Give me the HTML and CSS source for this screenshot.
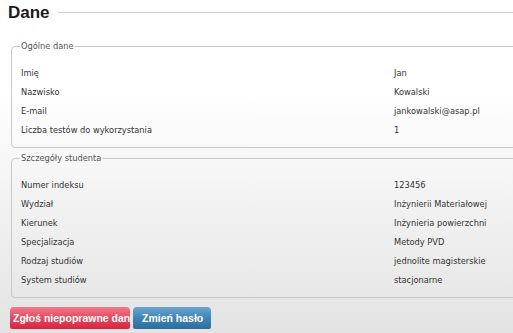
FILE: index.html
```html
<!DOCTYPE html>
<html lang="pl">
<head>
<meta charset="utf-8">
<link rel="stylesheet" href="styles.css">
</head>
<body>
<div class="page">
  <h1 class="title"><span>Dane</span><span class="title-line"></span></h1>

  <fieldset class="box">
    <legend>Ogólne dane</legend>
    <div class="rows">
      <div class="lbl">Imię</div><div class="val">Jan</div>
      <div class="lbl">Nazwisko</div><div class="val">Kowalski</div>
      <div class="lbl">E-mail</div><div class="val">jankowalski@asap.pl</div>
      <div class="lbl">Liczba testów do wykorzystania</div><div class="val">1</div>
    </div>
  </fieldset>

  <fieldset class="box">
    <legend>Szczegóły studenta</legend>
    <div class="rows">
      <div class="lbl">Numer indeksu</div><div class="val">123456</div>
      <div class="lbl">Wydział</div><div class="val">Inżynierii Materiałowej</div>
      <div class="lbl">Kierunek</div><div class="val">Inżynieria powierzchni</div>
      <div class="lbl">Specjalizacja</div><div class="val">Metody PVD</div>
      <div class="lbl">Rodzaj studiów</div><div class="val">jednolite magisterskie</div>
      <div class="lbl">System studiów</div><div class="val">stacjonarne</div>
    </div>
  </fieldset>

  <div class="actions">
    <button class="btn btn-red">Zgłoś niepoprawne dane</button>
    <button class="btn btn-blue">Zmień hasło</button>
  </div>
</div>
</body>
</html>
```

FILE: styles.css
```css
html, body {
  margin: 0;
  padding: 0;
  height: 100%;
  overflow: hidden;
}
body {
  background: linear-gradient(to bottom, #ffffff 0px, #ffffff 90px, #e3e3e3 333px);
  font-family: "DejaVu Sans Condensed", "DejaVu Sans", sans-serif;
  font-stretch: condensed;
  font-size: 9.2px;
  color: #333;
}
.page {
  padding: 0 0 0 8px;
  width: 600px;
}
.title {
  display: flex;
  align-items: center;
  margin: 0;
  padding-top: 2px;
  height: 22px;
  font-family: "Liberation Sans", Arial, sans-serif;
  font-size: 17px;
  font-weight: bold;
  color: #1a1a1a;
}
.title-line {
  flex: 1;
  height: 1px;
  background: #cfcfcf;
  margin-left: 8px;
  margin-top: -1px;
}
.box {
  margin: 16px 0 0 3px;
  border: 1px solid #c8c8c8;
  border-radius: 4px;
  padding: 0 9px 8px 9px;
  width: 560px;
}
.box + .box {
  margin-top: 4px;
}
.box legend {
  padding: 0 1px;
  margin-left: -1px;
  color: #555;
  line-height: 12px;
}
.rows {
  display: grid;
  grid-template-columns: 373px 1fr;
  grid-auto-rows: 19px;
  align-items: center;
  margin-top: 11px;
}
.actions {
  display: flex;
  gap: 3px;
  margin: 9px 0 0 2px;
}
.btn {
  border: 0;
  border-radius: 4px 4px 2px 2px;
  height: 22px;
  padding: 0;
  color: #fff;
  font-family: "Liberation Sans", Arial, sans-serif;
  font-weight: bold;
  font-size: 10.5px;
  overflow: hidden;
  white-space: nowrap;
  text-align: left;
}
.btn-red {
  width: 120px;
  padding-left: 3px;
  background: linear-gradient(to bottom, #f07b89 0%, #e5485e 50%, #d92440 100%);
}
.btn-blue {
  width: 78px;
  padding-left: 9px;
  background: linear-gradient(to bottom, #6aa6cf 0%, #3f85b6 50%, #2b6e9e 100%);
}
```
